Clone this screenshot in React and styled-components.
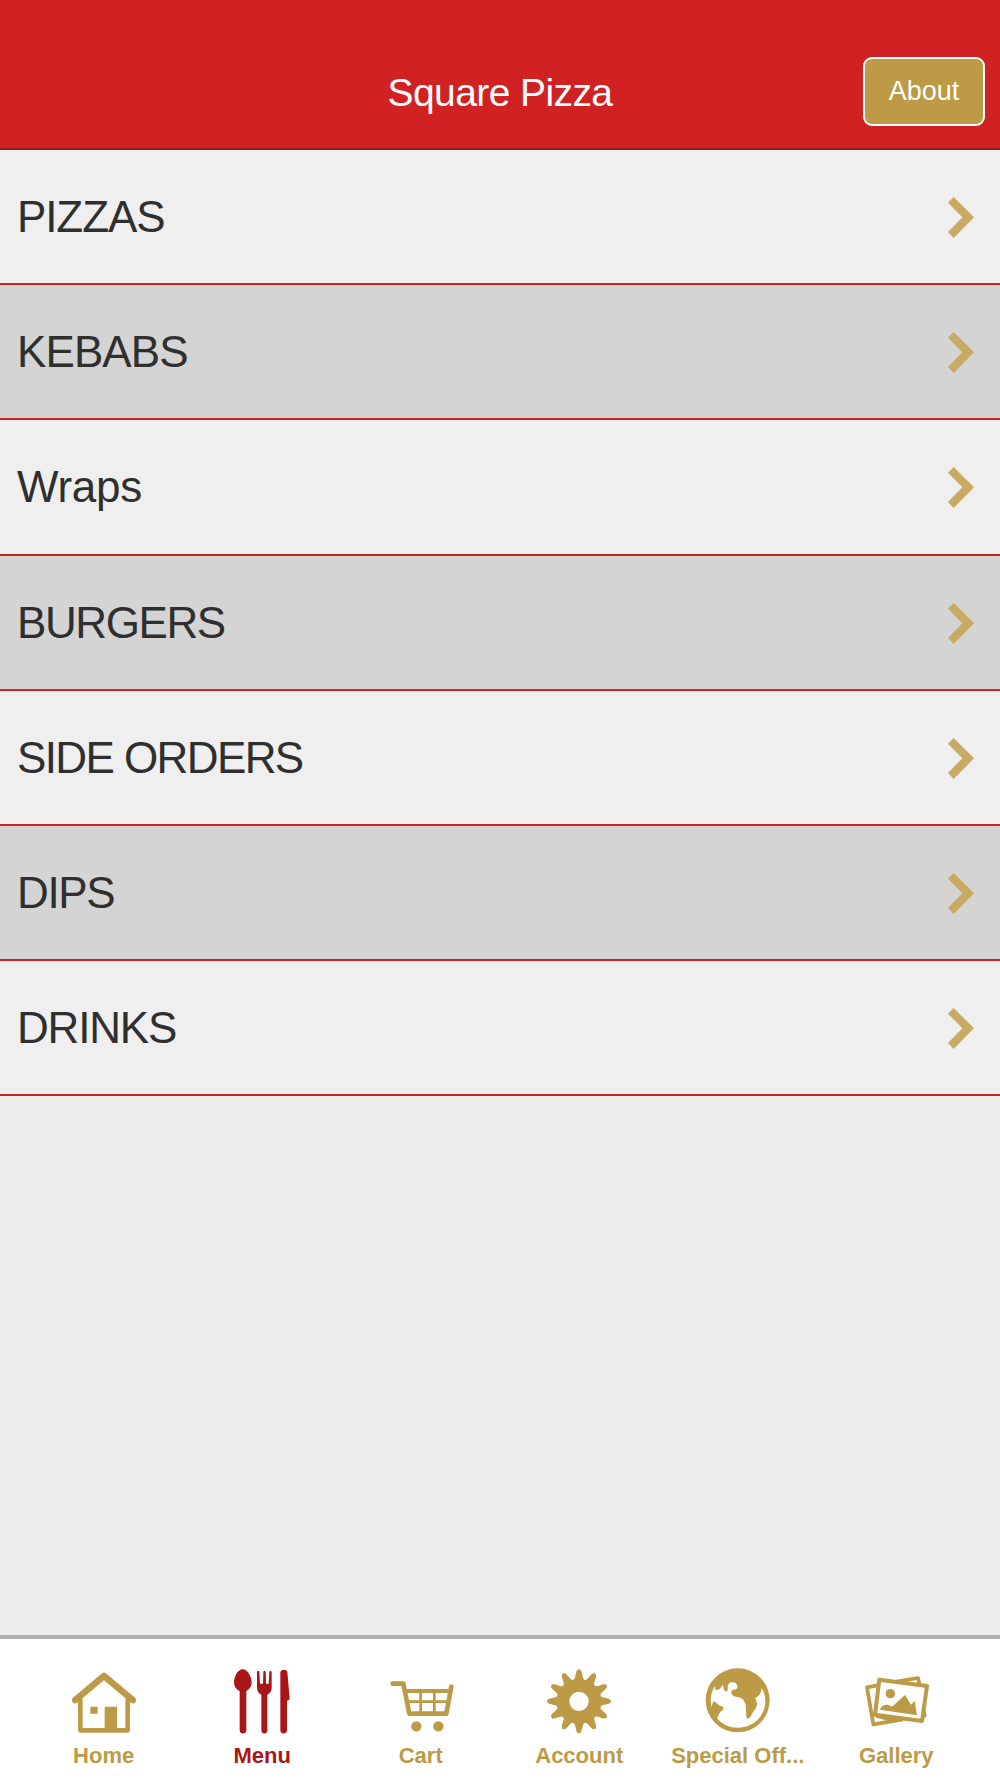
import { useState } from "react";
import styled, { createGlobalStyle } from "styled-components";

const GOLD = "#bd9a46";
const RED = "#d02222";

const categories = [
  { name: "PIZZAS", spacing: -1.1 },
  { name: "KEBABS", spacing: -0.9 },
  { name: "Wraps", spacing: -0.3 },
  { name: "BURGERS", spacing: -1.4 },
  { name: "SIDE ORDERS", spacing: -1.6 },
  { name: "DIPS", spacing: -1.4 },
  { name: "DRINKS", spacing: -1.2 },
];

const HomeIcon = () => (
  <Icon viewBox="93 144 198 198">
    <path
      d="M106 240 L192 168 L278 240"
      fill="none"
      stroke="currentColor"
      strokeWidth="20"
      strokeLinecap="round"
      strokeLinejoin="round"
    />
    <path
      d="M121 236 V331 H263 V236"
      fill="none"
      stroke="currentColor"
      strokeWidth="14"
      strokeLinejoin="round"
    />
    <path d="M151 260 h22 v21 h-22z M194 260 h37 v70 h-37z" />
  </Icon>
);

const MenuIcon = () => (
  <Icon viewBox="88 144 198 198">
    <path d="M129 148 C143 148 156 170 156 187 C156 199 150 208 140 213 V331 C140 344 120 344 120 331 V213 C109 208 103 199 103 187 C103 170 115 148 129 148z" />
    <path d="M172 156 C172 152 179 152 179 156 L181 191 H190 L191 156 C191 152 198 152 198 156 L199 191 H207 L209 156 C209 152 216 152 216 156 V203 C216 213 211 220 203 224 V331 C203 344 185 344 185 331 V224 C177 220 172 213 172 203z" />
    <path d="M242 158 C242 147 260 146 263 156 L270 235 C270 240 266 242 262 242 V331 C262 344 242 344 242 331z" />
  </Icon>
);

const CartIcon = () => (
  <Icon viewBox="83 144 198 198">
    <g
      fill="none"
      stroke="currentColor"
      strokeLinecap="round"
      strokeLinejoin="round"
    >
      <path d="M97 191 H129 L147 281 H258 L273 200" strokeWidth="14" />
      <path d="M136 213 H268" strokeWidth="12" />
      <path d="M143 245 H262 M181 215 V278 M222 215 V278" strokeWidth="8" />
    </g>
    <circle cx="168" cy="319" r="15.5" />
    <circle cx="234" cy="319" r="15.5" />
  </Icon>
);

const AccountIcon = () => {
  const teeth = Array.from({ length: 12 }, (_, i) => i * 30);
  return (
    <Icon viewBox="94 144 198 198">
      <circle
        cx="193"
        cy="244"
        r="48"
        fill="none"
        stroke="currentColor"
        strokeWidth="38"
      />
      {teeth.map((deg) => (
        <path
          key={deg}
          d="M174 182 C186 178 180 148 193 148 C206 148 200 178 212 182z"
          transform={`rotate(${deg} 193 244)`}
        />
      ))}
    </Icon>
  );
};

const GlobeIcon = () => (
  <Icon viewBox="134 144 198 198">
    <circle cx="232" cy="241" r="96" />
    <path
      fill="#fff"
      d="M151 242 C151 226 156 209 164 197 C163 206 165 210 170 210 C178 209 185 201 188 192 C188 201 190 211 195 214 C201 216 203 210 202 203 C202 188 211 185 219 187 C228 188 232 194 231 205 C226 210 214 208 213 216 C213 226 220 229 231 231 C244 233 253 240 256 255 C258 270 256 284 259 293 C264 301 272 288 277 278 C281 270 290 264 290 251 C290 243 285 238 285 233 C294 231 303 220 304 204 C311 216 315 228 315 243 C315 289 278 323 233 323 C207 323 187 313 171 296 C173 282 180 275 188 269 C191 264 190 261 184 259 C174 258 169 247 160 244 C157 247 156 255 153 262z"
    />
  </Icon>
);

const GalleryIcon = () => (
  <Icon viewBox="100 144 198 198">
    <g
      fill="none"
      stroke="currentColor"
      strokeWidth="11"
      strokeLinejoin="round"
    >
      <path d="M144 196 L112 202 L131 313 L220 298 M140 288 L200 302" />
      <path d="M200 185 L265 174 L269 190 M282 270 L285 287 L268 290" />
      <path
        d="M149 179 L292 198 L277 303 L136 284z"
        fill="#fff"
        strokeWidth="12"
      />
    </g>
    <circle cx="182" cy="221" r="14" />
    <path d="M151 269 C156 254 171 250 187 260 L226 225 L244 254 L255 243 L262 286z" />
  </Icon>
);

const tabs = [
  { label: "Home", icon: HomeIcon },
  { label: "Menu", icon: MenuIcon },
  { label: "Cart", icon: CartIcon },
  { label: "Account", icon: AccountIcon },
  { label: "Special Off...", icon: GlobeIcon },
  { label: "Gallery", icon: GalleryIcon },
];

const App = () => {
  const [active, setActive] = useState("Menu");

  return (
    <>
      <GlobalStyle />
      <Screen>
        <Header>
          <div />
          <Title>Square Pizza</Title>
          <AboutBtn type="button">About</AboutBtn>
        </Header>

        <List>
          {categories.map((c) => (
            <Row key={c.name}>
              <RowName $spacing={c.spacing}>{c.name}</RowName>
              <Chevron viewBox="145 171 78 123">
                <path d="M162 171 L223 232 L162 294 L145 276 L188 232 L145 188z" />
              </Chevron>
            </Row>
          ))}
        </List>

        <TabBar>
          {tabs.map(({ label, icon: TabIcon }) => (
            <Tab
              key={label}
              type="button"
              $active={active === label}
              onClick={() => setActive(label)}
            >
              <TabIcon />
              <TabLabel>{label}</TabLabel>
            </Tab>
          ))}
        </TabBar>
      </Screen>
    </>
  );
};

const GlobalStyle = createGlobalStyle`
  * {
    box-sizing: border-box;
  }
  body {
    margin: 0;
    background-color: #eeeeee;
    font-family: "Liberation Sans", Arial, sans-serif;
  }
`;

const Screen = styled.div`
  display: flex;
  flex-direction: column;
  width: 100%;
  height: 1778px;
  overflow: hidden;
  background-color: #eeeeee;
`;

const Header = styled.header`
  display: grid;
  grid-template-columns: 1fr auto 1fr;
  align-items: center;
  height: 150px;
  padding: 38px 15px 0;
  background-color: ${RED};
  border-bottom: 2px solid #8f1a1a;
`;

const Title = styled.h1`
  margin: 0;
  color: #fff;
  font-size: 39px;
  font-weight: 400;
  letter-spacing: -0.6px;
  line-height: 44px;
`;

const AboutBtn = styled.button`
  justify-self: end;
  width: 122px;
  height: 69px;
  margin-bottom: 3px;
  padding: 0 0 1px;
  border: 2px solid #fff;
  border-radius: 9px;
  background-color: ${GOLD};
  color: #fff;
  font-family: inherit;
  font-size: 27px;
`;

const List = styled.ul`
  flex: 1;
  margin: 0;
  padding: 0;
  list-style: none;
`;

const Row = styled.li`
  display: flex;
  align-items: center;
  justify-content: space-between;
  height: 135.2px;
  padding: 0 26px 0 17px;
  border-bottom: 2px solid ${RED};
  background-color: #efefef;
  &:nth-child(even) {
    background-color: #d4d4d4;
  }
`;

const RowName = styled.span`
  margin-top: 1px;
  color: #2f2f2f;
  font-size: 44px;
  letter-spacing: ${(props) => props.$spacing}px;
  line-height: 50px;
`;

const Chevron = styled.svg`
  width: 26px;
  height: 41px;
  margin-top: 2px;
  fill: #c9aa63;
`;

const TabBar = styled.nav`
  display: flex;
  height: 143px;
  padding: 0 24.4px;
  border-top: 4px solid #b0b0b0;
  background-color: #fff;
`;

const Tab = styled.button`
  display: flex;
  flex: 1 1 0;
  flex-direction: column;
  align-items: center;
  min-width: 0;
  padding: 29px 0 0;
  border: none;
  background: none;
  color: ${(props) => (props.$active ? "#aa1518" : GOLD)};
  font-family: inherit;
`;

const Icon = styled.svg`
  flex: none;
  width: 66px;
  height: 66px;
  fill: currentColor;
`;

const TabLabel = styled.span`
  margin-top: 9px;
  font-size: 22px;
  font-weight: 700;
  line-height: 26px;
  white-space: nowrap;
`;

export default App;
